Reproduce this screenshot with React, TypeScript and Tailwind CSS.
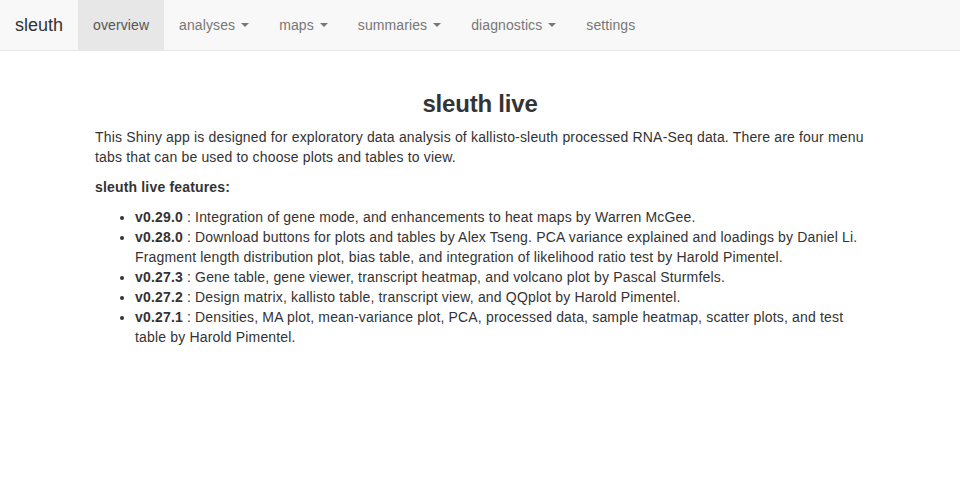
import React from 'react';

const NAV = [
  { label: 'overview', active: true },
  { label: 'analyses', dropdown: true },
  { label: 'maps', dropdown: true },
  { label: 'summaries', dropdown: true },
  { label: 'diagnostics', dropdown: true },
  { label: 'settings' },
];

const FEATURES = [
  { v: 'v0.29.0', text: 'Integration of gene mode, and enhancements to heat maps by Warren McGee.' },
  {
    v: 'v0.28.0',
    text: 'Download buttons for plots and tables by Alex Tseng. PCA variance explained and loadings by Daniel Li. Fragment length distribution plot, bias table, and integration of likelihood ratio test by Harold Pimentel.',
  },
  { v: 'v0.27.3', text: 'Gene table, gene viewer, transcript heatmap, and volcano plot by Pascal Sturmfels.' },
  { v: 'v0.27.2', text: 'Design matrix, kallisto table, transcript view, and QQplot by Harold Pimentel.' },
  {
    v: 'v0.27.1',
    text: 'Densities, MA plot, mean-variance plot, PCA, processed data, sample heatmap, scatter plots, and test table by Harold Pimentel.',
  },
];

function Caret() {
  return (
    <span className="ml-[2px] inline-block h-0 w-0 border-x-4 border-t-4 border-x-transparent border-t-current align-middle" />
  );
}

export default function App() {
  return (
    <div className="min-h-screen bg-white text-[14px] leading-5 text-[#333]" style={{ fontFamily: '"Liberation Sans", Arial, sans-serif' }}>
      <nav className="flex h-[51px] border-b border-[#e7e7e7] bg-[#f8f8f8]">
        <div className="flex h-[50px] items-center px-[15px] text-[18px] text-[#333]">sleuth</div>
        <ul className="flex tracking-[0.1px]">
          {NAV.map((item) => (
            <li
              key={item.label}
              className={`flex h-[50px] items-center px-[15px] ${
                item.active ? 'bg-[#e7e7e7] text-[#555]' : 'text-[#777]'
              }`}
            >
              {item.label}
              {item.dropdown && (
                <>
                  &nbsp;
                  <Caret />
                </>
              )}
            </li>
          ))}
        </ul>
      </nav>

      <main className="mx-[95px] pt-[20px]">
        <h3 className="mt-[20px] mb-[10px] text-center text-[24px] leading-[26px] font-bold tracking-[-0.2px]">sleuth live</h3>
        <div className="tracking-[0.17px]">
          <p className="mb-[10px]">
            This Shiny app is designed for exploratory data analysis of kallisto-sleuth processed RNA-Seq data. There are
            four menu tabs that can be used to choose plots and tables to view.
          </p>
          <p className="mb-[10px] font-bold">sleuth live features:</p>
          <ul className="list-disc pl-[40px]">
            {FEATURES.map((f) => (
              <li key={f.v}>
                <strong>{f.v}</strong> : {f.text}
              </li>
            ))}
          </ul>
        </div>
      </main>
    </div>
  );
}
